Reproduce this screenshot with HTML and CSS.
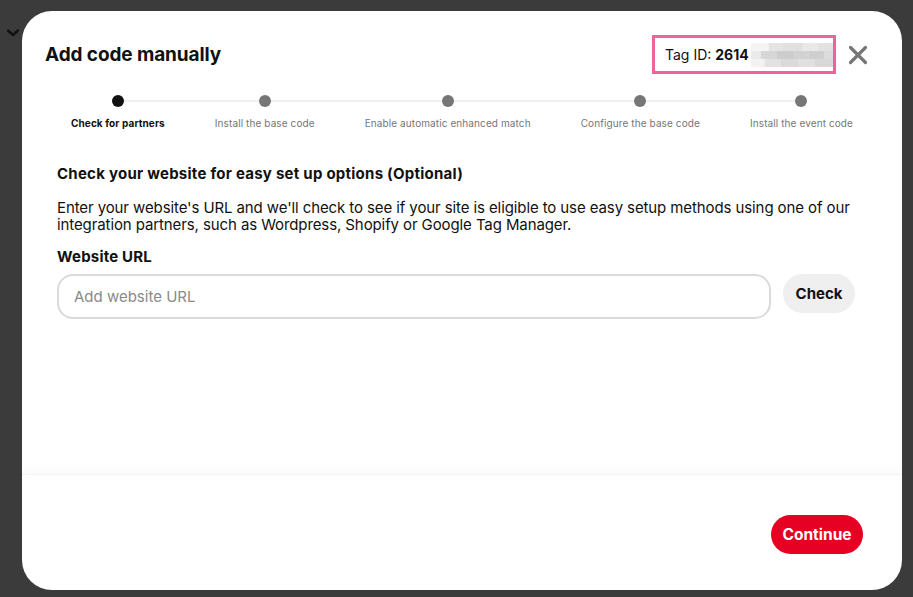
FILE: index.html
```html
<!DOCTYPE html>
<html lang="en">
<head>
<meta charset="utf-8">
<title>Add code manually</title>
<link rel="stylesheet" href="styles.css">
</head>
<body>
<div class="backdrop-chevron">
  <svg width="12" height="8" viewBox="0 0 12 8"><path d="M1 1.5 L6 6 L11 1.5" fill="none" stroke="#111" stroke-width="2.4" stroke-linecap="round" stroke-linejoin="round"/></svg>
</div>
<div class="modal">
  <header class="modal-header">
    <h1 class="title">Add code manually</h1>
    <div class="header-right">
      <div class="tag-box">
        <span class="tag-label">Tag ID: </span><span class="tag-id">2614</span>
        <svg class="blur" width="83" height="24" viewBox="0 0 83 24">
          <rect x="0" y="0" width="83" height="24" fill="#ececec"/>
          <rect x="0" y="0" width="18" height="8" fill="#f4f4f4"/>
          <rect x="18" y="0" width="14" height="8" fill="#e4e4e4"/>
          <rect x="32" y="0" width="20" height="8" fill="#e0e0e0"/>
          <rect x="52" y="0" width="16" height="8" fill="#e8e8e8"/>
          <rect x="68" y="0" width="15" height="8" fill="#e2e2e2"/>
          <rect x="0" y="8" width="10" height="8" fill="#eaeaea"/>
          <rect x="10" y="8" width="16" height="8" fill="#d6d6d6"/>
          <rect x="26" y="8" width="18" height="8" fill="#cdcdcd"/>
          <rect x="44" y="8" width="14" height="8" fill="#d2d2d2"/>
          <rect x="58" y="8" width="16" height="8" fill="#cfcfcf"/>
          <rect x="74" y="8" width="9" height="8" fill="#dcdcdc"/>
          <rect x="0" y="16" width="14" height="8" fill="#f2f2f2"/>
          <rect x="14" y="16" width="16" height="8" fill="#e2e2e2"/>
          <rect x="30" y="16" width="18" height="8" fill="#dadada"/>
          <rect x="48" y="16" width="16" height="8" fill="#e0e0e0"/>
          <rect x="64" y="16" width="19" height="8" fill="#d8d8d8"/>
        </svg>
      </div>
      <button class="close" aria-label="Close">
        <svg width="20" height="20" viewBox="0 0 20 20"><path d="M2.5 2.5 L17.5 17.5 M17.5 2.5 L2.5 17.5" fill="none" stroke="#767676" stroke-width="3.2" stroke-linecap="round"/></svg>
      </button>
    </div>
  </header>

  <div class="stepper">
    <div class="step active"><span class="dot"></span><span class="step-label">Check for partners</span></div>
    <div class="step"><span class="dot"></span><span class="step-label">Install the base code</span></div>
    <div class="step"><span class="dot"></span><span class="step-label">Enable automatic enhanced match</span></div>
    <div class="step"><span class="dot"></span><span class="step-label">Configure the base code</span></div>
    <div class="step"><span class="dot"></span><span class="step-label">Install the event code</span></div>
  </div>

  <main class="content">
    <h2 class="section-title">Check your website for easy set up options (Optional)</h2>
    <p class="section-text">Enter your website's URL and we'll check to see if your site is eligible to use easy setup methods using one of our integration partners, such as Wordpress, Shopify or Google Tag Manager.</p>
    <label class="field-label" for="url">Website URL</label>
    <div class="url-row">
      <input id="url" class="url-input" type="text" placeholder="Add website URL">
      <button class="btn btn-gray">Check</button>
    </div>
  </main>

  <footer class="modal-footer">
    <button class="btn btn-red">Continue</button>
  </footer>
</div>
</body>
</html>
```

FILE: styles.css
```css
* { box-sizing: border-box; }
html, body { margin: 0; height: 100%; }
body {
  background: #3b3b3b;
  font-family: Inter, "Noto Sans", "Liberation Sans", sans-serif;
  color: #111111;
  padding: 11px 0 0 22px;
  overflow: hidden;
  position: relative;
}
.backdrop-chevron {
  position: absolute;
  left: 7px;
  top: 29px;
  line-height: 0;
}
.modal {
  position: relative;
  width: 880px;
  height: 579px;
  background: #ffffff;
  border-radius: 30px;
  display: flex;
  flex-direction: column;
  overflow: hidden;
}
.modal-header {
  display: flex;
  align-items: center;
  justify-content: space-between;
  padding: 24px 34px 0 23px;
}
.title {
  margin: 0;
  font-size: 19px;
  font-weight: 700;
  letter-spacing: -0.1px;
  line-height: 24px;
}
.header-right {
  display: flex;
  align-items: center;
  gap: 12px;
}
.tag-box {
  width: 184px;
  height: 39px;
  border: 3px solid #f0629a;
  display: flex;
  align-items: center;
  padding-left: 10px;
  font-size: 14px;
  white-space: pre;
}
.tag-id { font-weight: 700; }
.blur { margin-left: 2px; display: block; }
.close {
  border: 0;
  background: none;
  padding: 0;
  width: 20px;
  height: 20px;
  line-height: 0;
  cursor: pointer;
}
.stepper {
  position: relative;
  display: flex;
  justify-content: space-between;
  padding: 0 49px;
  margin-top: 21px;
}
.stepper::before {
  content: "";
  position: absolute;
  top: 5px;
  left: 96px;
  right: 100px;
  height: 2px;
  background: #f0f0f0;
}
.step {
  position: relative;
  display: flex;
  flex-direction: column;
  align-items: center;
}
.dot {
  width: 12px;
  height: 12px;
  border-radius: 50%;
  background: #767676;
}
.step.active .dot { background: #111111; }
.step-label {
  margin-top: 10px;
  font-size: 10px;
  line-height: 12px;
  color: #767676;
  letter-spacing: 0.1px;
  white-space: nowrap;
}
.step.active .step-label { color: #111111; font-weight: 700; }
.content {
  flex: 1;
  padding: 36px 47px 0 35px;
}
.section-title {
  margin: 0;
  font-size: 15px;
  line-height: 18px;
  font-weight: 700;
  letter-spacing: 0.25px;
}
.section-text {
  margin: 16px -6px 0 0;
  font-size: 15px;
  line-height: 17px;
  letter-spacing: -0.1px;
}
.field-label {
  display: block;
  margin-top: 15px;
  font-size: 15px;
  line-height: 18px;
  font-weight: 700;
  letter-spacing: 0.2px;
}
.url-row {
  display: flex;
  align-items: flex-start;
  gap: 12px;
  margin-top: 8px;
}
.url-input {
  flex: 1;
  height: 45px;
  border: 2px solid #dadada;
  border-radius: 16px;
  padding: 0 15px;
  font-family: inherit;
  font-size: 15px;
  color: #111;
  outline: none;
}
.url-input::placeholder { color: #8a8a8a; }
.btn {
  border: 0;
  font-family: inherit;
  font-weight: 700;
  font-size: 15px;
  border-radius: 20px;
  cursor: pointer;
}
.btn-gray {
  background: #efefef;
  color: #111;
  width: 72px;
  height: 39px;
}
.modal-footer {
  height: 116px;
  display: flex;
  align-items: center;
  justify-content: flex-end;
  padding: 3px 39px 0 0;
  border-top: 1px solid #f3f3f3;
  box-shadow: 0 -6px 10px rgba(0, 0, 0, 0.025);
}
.btn-red {
  background: #e60023;
  color: #ffffff;
  width: 92px;
  height: 39px;
  font-size: 15.5px;
}
```
